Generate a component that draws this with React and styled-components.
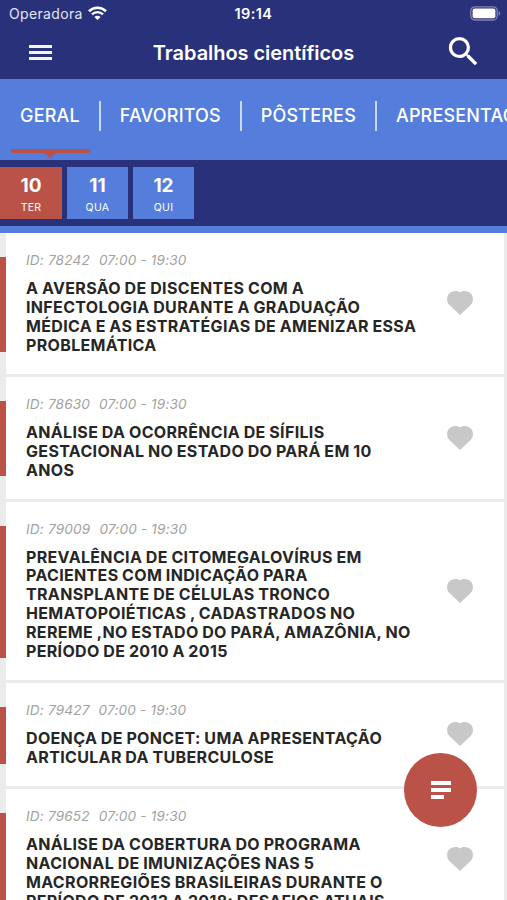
import { useState } from "react";
import styled, { createGlobalStyle } from "styled-components";

const tabs = ["GERAL", "FAVORITOS", "PÔSTERES", "APRESENTAÇÕES"];

const days = [
  { number: "10", name: "TER" },
  { number: "11", name: "QUA" },
  { number: "12", name: "QUI" },
];

const works = [
  {
    id: "78242",
    time: "07:00 - 19:30",
    title:
      "A AVERSÃO DE DISCENTES COM A\nINFECTOLOGIA DURANTE A GRADUAÇÃO\nMÉDICA E AS ESTRATÉGIAS DE AMENIZAR ESSA\nPROBLEMÁTICA",
  },
  {
    id: "78630",
    time: "07:00 - 19:30",
    title:
      "ANÁLISE DA OCORRÊNCIA DE SÍFILIS\nGESTACIONAL NO ESTADO DO PARÁ EM 10\nANOS",
  },
  {
    id: "79009",
    time: "07:00 - 19:30",
    title:
      "PREVALÊNCIA DE CITOMEGALOVÍRUS EM\nPACIENTES COM INDICAÇÃO PARA\nTRANSPLANTE DE CÉLULAS TRONCO\nHEMATOPOIÉTICAS , CADASTRADOS NO\nREREME ,NO ESTADO DO PARÁ, AMAZÔNIA, NO\nPERÍODO DE 2010 A 2015",
  },
  {
    id: "79427",
    time: "07:00 - 19:30",
    title: "DOENÇA DE PONCET: UMA APRESENTAÇÃO\nARTICULAR DA TUBERCULOSE",
  },
  {
    id: "79652",
    time: "07:00 - 19:30",
    title:
      "ANÁLISE DA COBERTURA DO PROGRAMA\nNACIONAL DE IMUNIZAÇÕES NAS 5\nMACRORREGIÕES BRASILEIRAS DURANTE O\nPERÍODO DE 2013 A 2018: DESAFIOS ATUAIS",
  },
];

const WifiIcon = () => (
  <svg width="19" height="15" viewBox="0 0 19 15" fill="none">
    <path d="M1 5.2 C5.8 0.5 13.2 0.5 18 5.2" stroke="#fff" strokeWidth="2.6" />
    <path d="M4 8.4 C7.2 5.4 11.8 5.4 15 8.4" stroke="#fff" strokeWidth="2.4" />
    <path d="M9.5 14 L6.4 10.9 C8.2 9.3 10.8 9.3 12.6 10.9 Z" fill="#fff" />
  </svg>
);

const BatteryIcon = () => (
  <svg width="31" height="15" viewBox="0 0 31 15">
    <rect x="0.8" y="0.8" width="26.4" height="13.2" rx="4" fill="none" stroke="#8085b2" strokeWidth="1.3" />
    <rect x="2.6" y="2.6" width="22.8" height="9.6" rx="2" fill="#fff" />
    <path d="M28.6 5 C30.8 6 30.8 8.8 28.6 9.8 Z" fill="#8085b2" />
  </svg>
);

const SearchIcon = () => (
  <svg width="39" height="39" viewBox="0 0 24 24" fill="#fff">
    <path d="M15.5 14h-.79l-.28-.27A6.471 6.471 0 0 0 16 9.5 6.5 6.5 0 1 0 9.5 16c1.61 0 3.09-.59 4.23-1.57l.27.28v.79l5 4.99L20.49 19l-4.99-5zm-6 0C7.01 14 5 11.99 5 9.5S7.01 5 9.5 5 14 7.01 14 9.5 11.99 14 9.5 14z" />
  </svg>
);

const HeartIcon = () => (
  <svg width="26" height="24" viewBox="0 0 26 24" fill="#c8c8c8">
    <path d="M13 24 L2.4 14 C-0.6 11 -0.7 5.5 2 2.7 C4.7 -0.2 9.8 -0.9 13 1.6 C16.2 -0.9 21.3 -0.2 24 2.7 C26.7 5.5 26.6 11 23.6 14 Z" />
  </svg>
);

const App = () => {
  const [day, setDay] = useState("10");
  const [tab, setTab] = useState("GERAL");

  return (
    <Screen>
      <GlobalStyle />
      <StatusBar>
        <Carrier>
          Operadora
          <WifiIcon />
        </Carrier>
        <Clock>19:14</Clock>
        <Battery>
          <BatteryIcon />
        </Battery>
      </StatusBar>
      <Header>
        <MenuButton aria-label="Menu">
          <MenuLine />
          <MenuLine />
          <MenuLine />
        </MenuButton>
        <PageTitle>Trabalhos científicos</PageTitle>
        <SearchButton aria-label="Buscar">
          <SearchIcon />
        </SearchButton>
      </Header>
      <Tabs>
        {tabs.map((item) => (
          <Tab key={item} onClick={() => setTab(item)}>
            {item}
            {tab === item && <Marker />}
          </Tab>
        ))}
      </Tabs>
      <Days>
        {days.map((item) => (
          <Day key={item.number} $active={day === item.number} onClick={() => setDay(item.number)}>
            <DayNumber>{item.number}</DayNumber>
            <DayName>{item.name}</DayName>
          </Day>
        ))}
      </Days>
      <List>
        {works.map((work) => (
          <Row key={work.id}>
            <Stripe />
            <Card>
              <Info>
                <Meta>
                  <span>ID: {work.id}</span>
                  <span>{work.time}</span>
                </Meta>
                <WorkTitle>{work.title}</WorkTitle>
              </Info>
              <Favorite aria-label="Favoritar">
                <HeartIcon />
              </Favorite>
            </Card>
          </Row>
        ))}
      </List>
      <FilterButton aria-label="Filtrar">
        <FilterLine $width="20px" />
        <FilterLine $width="20px" />
        <FilterLine $width="13px" />
      </FilterButton>
    </Screen>
  );
};

const GlobalStyle = createGlobalStyle`
  * {
    box-sizing: border-box;
  }
  body {
    margin: 0;
    overflow: hidden;
    font-family: Inter, "Liberation Sans", sans-serif;
  }
  button {
    border: none;
    padding: 0;
    background: none;
    font-family: inherit;
    color: inherit;
    cursor: pointer;
  }
  svg {
    display: block;
  }
`;

const Screen = styled.div`
  position: relative;
  width: 507px;
  height: 900px;
  overflow: hidden;
  display: flex;
  flex-direction: column;
  background-color: #ebebeb;
`;

const StatusBar = styled.div`
  flex: none;
  height: 27px;
  display: grid;
  grid-template-columns: 1fr auto 1fr;
  align-items: center;
  padding: 0 6px 0 9px;
  background-color: #2a317b;
  color: white;
`;

const Carrier = styled.div`
  display: flex;
  align-items: center;
  gap: 5px;
  font-size: 14px;
  letter-spacing: 0.35px;
  color: #e4e6f4;
`;

const Clock = styled.div`
  margin-right: 3px;
  font-size: 14.5px;
  font-weight: 600;
  letter-spacing: 0.4px;
`;

const Battery = styled.div`
  display: flex;
  justify-content: flex-end;
`;

const Header = styled.header`
  flex: none;
  height: 52px;
  display: grid;
  grid-template-columns: 80px 1fr 80px;
  align-items: center;
  background-color: #2a317b;
  color: white;
`;

const MenuButton = styled.button`
  justify-self: center;
  width: 23px;
  display: flex;
  flex-direction: column;
  gap: 3.5px;
  padding-bottom: 1px;
`;

const MenuLine = styled.span`
  height: 2.7px;
  background-color: #f4f5fb;
`;

const PageTitle = styled.h1`
  margin: 0;
  text-align: center;
  font-size: 20px;
  font-weight: 600;
  letter-spacing: -0.05px;
`;

const SearchButton = styled.button`
  justify-self: center;
  margin: 0 8px 4px 0;
`;

const Tabs = styled.nav`
  flex: none;
  height: 81px;
  display: flex;
  align-items: center;
  overflow: hidden;
  background-color: #557ddb;
`;

const Tab = styled.button`
  position: relative;
  flex: none;
  height: 81px;
  display: flex;
  align-items: center;
  padding: 0 20px 8px;
  font-size: 18px;
  font-weight: 500;
  letter-spacing: 0.17px;
  color: white;

  & + &::before {
    content: "";
    width: 2px;
    height: 30px;
    margin: 0 19px 0 -21px;
    background-color: #c9daf8;
  }
`;

const Marker = styled.span`
  position: absolute;
  left: 11px;
  bottom: 7px;
  width: 79px;
  height: 4px;
  background-color: #bb5248;

  &::after {
    content: "";
    position: absolute;
    top: 4px;
    left: 33px;
    border: 6px solid transparent;
    border-top: 5px solid #bb5248;
    border-bottom: none;
  }
`;

const Days = styled.div`
  flex: none;
  height: 73px;
  display: flex;
  gap: 5px;
  padding-top: 7px;
  background-color: #2a317b;
  border-bottom: 7px solid #557ddb;
`;

const Day = styled.button`
  width: 61px;
  height: 52px;
  display: flex;
  flex-direction: column;
  align-items: center;
  gap: 2px;
  padding-top: 7px;
  color: white;
  background-color: ${(props) => (props.$active ? "#bb5248" : "#557ddb")};

  &:first-child {
    width: 62px;
  }
`;

const DayNumber = styled.span`
  font-size: 19px;
  line-height: 23px;
  font-weight: 700;
`;

const DayName = styled.span`
  font-size: 10.5px;
  line-height: 17px;
  letter-spacing: 0.3px;
`;

const List = styled.main`
  flex: 1;
  min-height: 0;
  overflow: hidden;
`;

const Row = styled.article`
  display: flex;
  padding: 0 3px 2.6px 0;
`;

const Stripe = styled.div`
  width: 6px;
  margin: 24px 0 22.5px;
  background-color: #bb5248;
`;

const Card = styled.div`
  flex: 1;
  display: flex;
  align-items: center;
  justify-content: space-between;
  padding: 19px 31px 19.5px 20px;
  background-color: white;
`;

const Info = styled.div`
  flex: none;
`;

const Meta = styled.div`
  display: flex;
  gap: 9px;
  font-size: 13.6px;
  line-height: 17px;
  margin-bottom: 10px;
  font-style: italic;
  letter-spacing: 0.18px;
  color: #a2a2a2;
`;

const WorkTitle = styled.h2`
  margin: 0;
  width: 400px;
  white-space: pre;
  font-size: 16px;
  line-height: 18.9px;
  font-weight: 700;
  letter-spacing: 0.34px;
  word-spacing: -0.5px;
  color: #262626;
`;

const Favorite = styled.button`
  flex: none;
`;

const FilterButton = styled.button`
  position: absolute;
  right: 30px;
  bottom: 73px;
  width: 73px;
  height: 74px;
  border-radius: 50%;
  display: flex;
  flex-direction: column;
  justify-content: center;
  gap: 3.5px;
  padding-left: 27px;
  background-color: #bb5248;
`;

const FilterLine = styled.span`
  width: ${(props) => props.$width};
  height: 3.5px;
  background-color: white;
`;

export default App;
